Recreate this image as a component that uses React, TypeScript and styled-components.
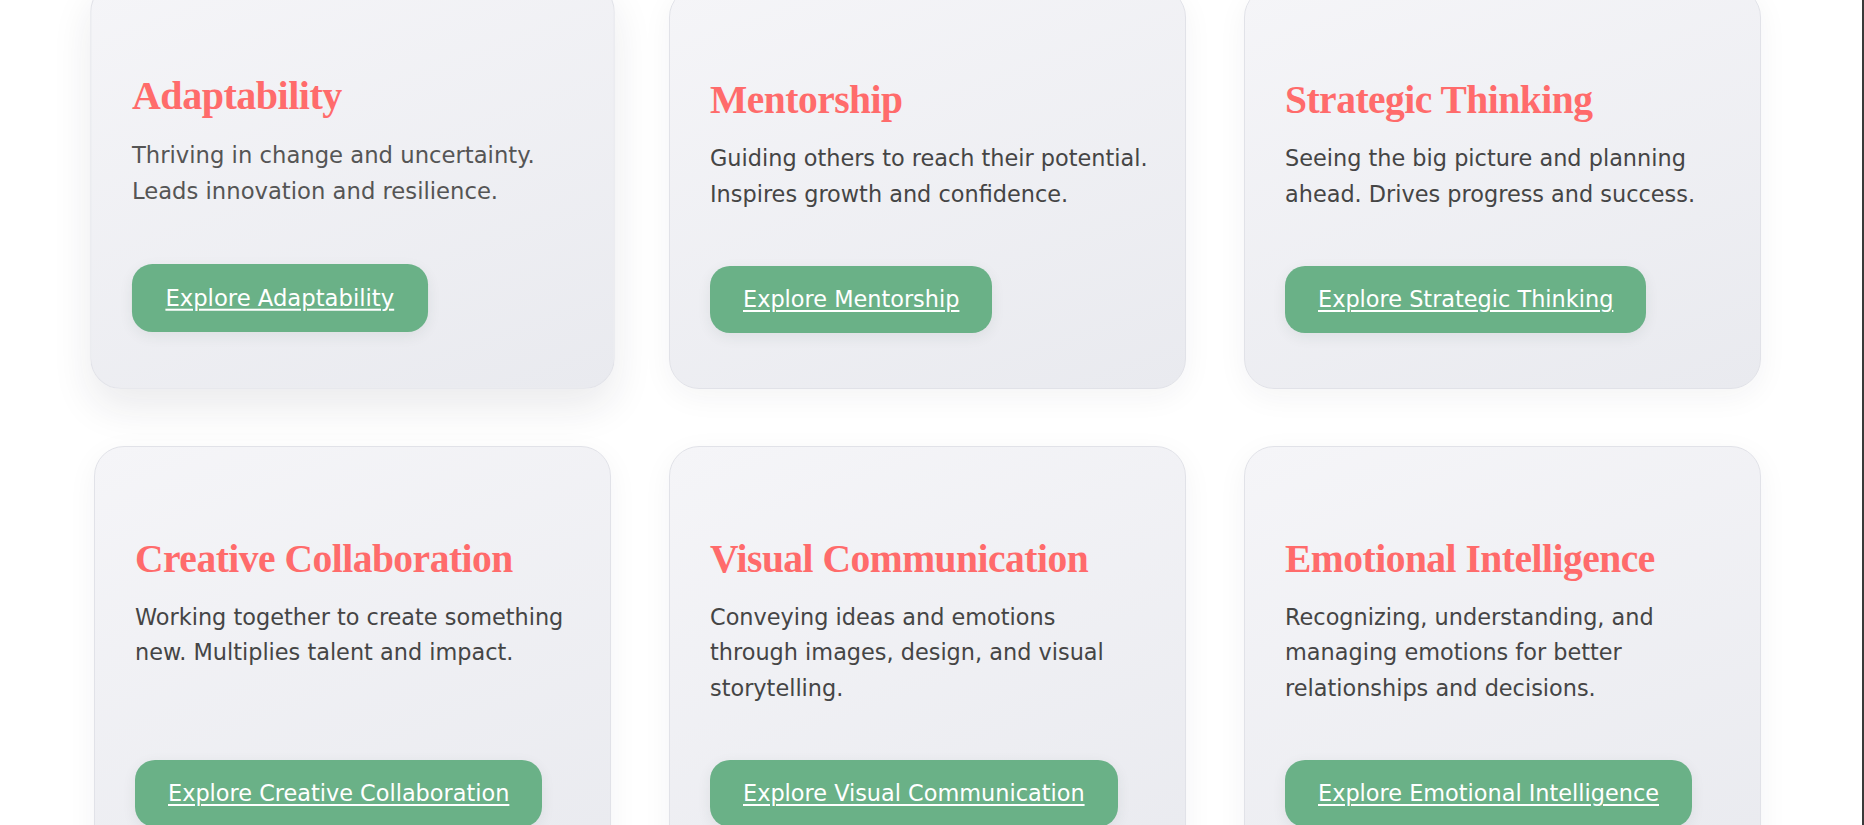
import React from "react";
import styled, { createGlobalStyle } from "styled-components";

const GlobalStyle = createGlobalStyle`
  html, body {
    margin: 0;
    padding: 0;
    background: #ffffff;
    overflow: hidden;
  }
  body {
    font-family: "DejaVu Sans", "Noto Sans", sans-serif;
  }
`;

const Page = styled.main`
  width: 100%;
  height: 825px;
  overflow: hidden;
  box-sizing: border-box;
  padding: 0 0 0 94px;
`;

const Grid = styled.section`
  display: grid;
  grid-template-columns: 517px 517px 517px;
  column-gap: 58px;
  row-gap: 57px;
  margin-top: -13px;
`;

const Card = styled.article<{ $hover?: boolean }>`
  display: flex;
  flex-direction: column;
  box-sizing: border-box;
  padding: 40px 40px 55px;
  border: 1px solid #e1e2e8;
  border-radius: 30px;
  background: linear-gradient(160deg, #f5f5f8 0%, #e9eaef 100%);
  box-shadow: ${(p) =>
    p.$hover
      ? "0 18px 40px rgba(30, 30, 60, 0.09)"
      : "0 8px 30px rgba(30, 30, 60, 0.05)"};
  transform: ${(p) => (p.$hover ? "translateY(-3px) scale(1.014)" : "none")};
`;

const Spacer = styled.div`
  height: 50px;
  flex: none;
`;

const Title = styled.h3`
  margin: 0 0 19px;
  font-family: "Liberation Serif", "DejaVu Serif", serif;
  font-weight: 700;
  font-size: 39.5px;
  line-height: 44px;
  color: #ff6b6b;
  letter-spacing: -0.5px;
`;

const Desc = styled.p<{ $hover?: boolean }>`
  margin: 0 0 53px;
  font-family: "DejaVu Sans", "Noto Sans", sans-serif;
  font-size: 22.4px;
  line-height: 35.8px;
  color: ${(p) => (p.$hover ? "#555555" : "#454545")};
  white-space: nowrap;
`;

const Button = styled.a`
  align-self: flex-start;
  margin-top: auto;
  display: inline-block;
  padding: 20px 33px;
  border-radius: 20px;
  background: #6ab187;
  color: #ffffff;
  font-family: "DejaVu Sans", "Noto Sans", sans-serif;
  font-size: 22.4px;
  line-height: 27px;
  text-decoration: underline;
  text-underline-offset: 3px;
  text-decoration-thickness: 1.5px;
  box-shadow: 0 4px 14px rgba(40, 60, 50, 0.08);
  cursor: pointer;
`;

const EdgeLine = styled.div`
  position: fixed;
  top: 0;
  right: 0;
  width: 2px;
  height: 100%;
  background: #3a3a3a;
`;

type Item = { title: string; lines: string[]; cta: string };

const items: Item[] = [
  {
    title: "Adaptability",
    lines: ["Thriving in change and uncertainty.", "Leads innovation and resilience."],
    cta: "Explore Adaptability",
  },
  {
    title: "Mentorship",
    lines: ["Guiding others to reach their potential.", "Inspires growth and confidence."],
    cta: "Explore Mentorship",
  },
  {
    title: "Strategic Thinking",
    lines: ["Seeing the big picture and planning", "ahead. Drives progress and success."],
    cta: "Explore Strategic Thinking",
  },
  {
    title: "Creative Collaboration",
    lines: ["Working together to create something", "new. Multiplies talent and impact."],
    cta: "Explore Creative Collaboration",
  },
  {
    title: "Visual Communication",
    lines: ["Conveying ideas and emotions", "through images, design, and visual", "storytelling."],
    cta: "Explore Visual Communication",
  },
  {
    title: "Emotional Intelligence",
    lines: [
      "Recognizing, understanding, and",
      "managing emotions for better",
      "relationships and decisions.",
    ],
    cta: "Explore Emotional Intelligence",
  },
];

export default function App() {
  return (
    <>
      <GlobalStyle />
      <Page>
        <Grid>
          {items.map((it, i) => (
            <Card key={it.title} $hover={i === 0}>
              <Spacer />
              <Title>{it.title}</Title>
              <Desc $hover={i === 0}>
                {it.lines.map((l, j) => (
                  <React.Fragment key={j}>
                    {l}
                    {j < it.lines.length - 1 && <br />}
                  </React.Fragment>
                ))}
              </Desc>
              <Button>{it.cta}</Button>
            </Card>
          ))}
        </Grid>
      </Page>
      <EdgeLine />
    </>
  );
}
